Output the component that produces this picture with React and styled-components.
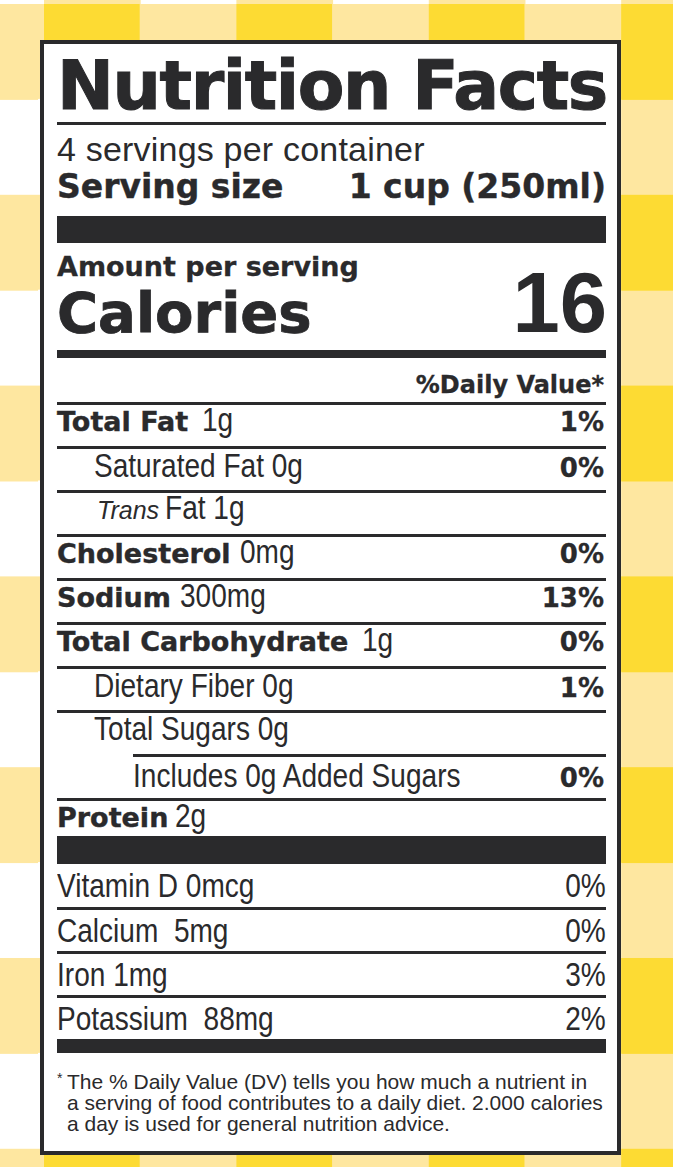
import React from "react";
import styled, { createGlobalStyle } from "styled-components";

const INK = "#2a2a2c";
const HEAVY = `"DejaVu Sans", "Liberation Sans", Arial, sans-serif`;
const PLAIN = `"Liberation Sans", Arial, sans-serif`;

const GlobalStyle = createGlobalStyle`
  html, body { margin: 0; padding: 0; background: #fff; }
  * { box-sizing: border-box; }
`;

const Page = styled.div`
  width: 673px;
  height: 1167px;
  overflow: hidden;
  padding: 40px 0 0 40px;
  background-color: #fff;
  background-image: conic-gradient(
    from 0deg at 50% 50%,
    #fee7a0 0 25%,
    #ffffff 0 50%,
    #fee7a0 0 75%,
    #fddb33 0
  );
  background-size: 192.4px 190.8px;
  background-position: 44px 4px;
`;

const Label = styled.section`
  width: 581px;
  border: 4px solid ${INK};
  background: #fff;
  color: ${INK};
  padding: 0 11px 17px 13px;
`;

const Title = styled.h1`
  margin: 8px 0 0;
  font-family: ${HEAVY};
  font-weight: 700;
  font-size: 68px;
  line-height: 68px;
  letter-spacing: -1.4px;
  -webkit-text-stroke: 1px ${INK};
  white-space: nowrap;
`;

const Rule = styled.div`
  height: ${(p) => p.$h}px;
  margin-top: ${(p) => p.$mt || 0}px;
  background: ${INK};
`;

const Servings = styled.div`
  margin-top: 6px;
  font-family: ${PLAIN};
  font-size: 34px;
  line-height: 36px;
  letter-spacing: 0.2px;
`;

const ServingSize = styled.div`
  margin-top: 2px;
  display: flex;
  justify-content: space-between;
  font-family: ${HEAVY};
  font-weight: 700;
  font-size: 33px;
  line-height: 36px;
  -webkit-text-stroke: 0.4px ${INK};
  white-space: nowrap;
`;

const CalBlock = styled.div`
  margin-top: 5px;
  display: flex;
  justify-content: space-between;
  align-items: flex-end;
`;

const CalLeft = styled.div`
  display: flex;
  flex-direction: column;
  font-family: ${HEAVY};
  font-weight: 700;
`;

const Amount = styled.div`
  font-size: 27px;
  line-height: 37px;
  -webkit-text-stroke: 0.3px ${INK};
`;

const CalWord = styled.div`
  font-size: 56px;
  line-height: 56px;
  -webkit-text-stroke: 0.8px ${INK};
`;

const CalValue = styled.div`
  font-family: ${PLAIN};
  font-weight: 700;
  font-size: 85px;
  line-height: 76px;
  margin-right: -1px;
`;

const DVHead = styled.div`
  height: 44px;
  padding-top: 15px;
  padding-right: 2px;
  text-align: right;
  font-family: ${HEAVY};
  font-weight: 700;
  font-size: 24px;
  line-height: 24px;
  -webkit-text-stroke: 0.3px ${INK};
`;

const Row = styled.div`
  display: flex;
  justify-content: space-between;
  align-items: baseline;
  height: ${(p) => p.$h || 44}px;
  margin-left: ${(p) => p.$inset || 0}px;
  border-top: ${(p) => (p.$noRule ? "none" : `3px solid ${INK}`)};
  padding-top: ${(p) => p.$pt || 0}px;
  padding-left: ${(p) => p.$indent || 0}px;
  line-height: 30px;
  white-space: pre;
`;

const Name = styled.span`
  display: flex;
  align-items: baseline;
`;

const Bold = styled.span`
  font-family: ${HEAVY};
  font-weight: 700;
  font-size: 27px;
  -webkit-text-stroke: 0.4px ${INK};
`;

/* Condensed Helvetica look: regular face squeezed horizontally */
const Reg = styled.span`
  display: inline-block;
  font-family: ${PLAIN};
  font-size: 33px;
  margin-left: ${(p) => p.$ml || 0}px;
  transform: scaleX(0.85);
  transform-origin: ${(p) => (p.$right ? "right" : "left")} center;
`;

const Ital = styled.span`
  font-family: ${PLAIN};
  font-style: italic;
  font-size: 25px;
  margin-right: 6px;
`;

const Pct = styled.span`
  font-family: ${HEAVY};
  font-weight: 700;
  font-size: 26px;
  padding-right: 2px;
  -webkit-text-stroke: 0.3px ${INK};
`;

const Footnote = styled.div`
  margin-top: 18px;
  display: flex;
  font-family: ${PLAIN};
  font-size: 21px;
  line-height: 21px;
`;

const Star = styled.span`
  width: 10px;
  flex: none;
  font-size: 14px;
  line-height: 14px;
`;

const Note = styled.p`
  margin: 0;
  white-space: nowrap;
`;

const nutrients = [
  { bold: "Total Fat", amount: "1g", ml: 14, dv: "1%" },
  { indent: 37, text: "Saturated Fat 0g", dv: "0%", pt: 2 },
  { indent: 40, ital: "Trans", text: "Fat 1g" },
  { bold: "Cholesterol", amount: "0mg", ml: 9, dv: "0%" },
  { bold: "Sodium", amount: "300mg", ml: 9, dv: "13%" },
  { bold: "Total Carbohydrate", amount: "1g", ml: 14, dv: "0%" },
  { indent: 37, text: "Dietary Fiber 0g", dv: "1%", pt: 2 },
  { indent: 37, text: "Total Sugars 0g", pt: 1 },
  { inset: 76, text: "Includes 0g Added Sugars", dv: "0%", pt: 4 },
  { bold: "Protein", amount: "2g", ml: 7, h: 38 },
];

const vitamins = [
  { text: "Vitamin D 0mcg", dv: "0%", noRule: true, h: 43, pt: 7 },
  { text: "Calcium  5mg", dv: "0%", pt: 6 },
  { text: "Iron 1mg", dv: "3%", pt: 6 },
  { text: "Potassium  88mg", dv: "2%", pt: 6 },
];

function NutrientRow({ n }) {
  return (
    <Row $h={n.h} $inset={n.inset} $indent={n.indent} $pt={n.pt} $noRule={n.noRule}>
      <Name>
        {n.bold && <Bold>{n.bold}</Bold>}
        {n.amount && <Reg $ml={n.ml}>{n.amount}</Reg>}
        {n.ital && <Ital>{n.ital}</Ital>}
        {n.text && <Reg>{n.text}</Reg>}
      </Name>
      {n.dv && <Pct>{n.dv}</Pct>}
    </Row>
  );
}

export default function App() {
  return (
    <>
      <GlobalStyle />
      <Page>
        <Label>
          <Title>Nutrition Facts</Title>
          <Rule $h={3} $mt={2} />
          <Servings>4 servings per container</Servings>
          <ServingSize>
            <span>Serving size</span>
            <span>1 cup (250ml)</span>
          </ServingSize>
          <Rule $h={27} $mt={11} />
          <CalBlock>
            <CalLeft>
              <Amount>Amount per serving</Amount>
              <CalWord>Calories</CalWord>
            </CalLeft>
            <CalValue>16</CalValue>
          </CalBlock>
          <Rule $h={8} $mt={9} />
          <DVHead>%Daily Value*</DVHead>
          {nutrients.map((n, i) => (
            <NutrientRow key={i} n={n} />
          ))}
          <Rule $h={28} />
          {vitamins.map((v, i) => (
            <Row key={i} $h={v.h} $pt={v.pt} $noRule={v.noRule}>
              <Reg>{v.text}</Reg>
              <Reg $right>{v.dv}</Reg>
            </Row>
          ))}
          <Rule $h={14} />
          <Footnote>
            <Star>*</Star>
            <Note>
              The % Daily Value (DV) tells you how much a nutrient in
              <br />
              a serving of food contributes to a daily diet. 2.000 calories
              <br />
              a day is used for general nutrition advice.
            </Note>
          </Footnote>
        </Label>
      </Page>
    </>
  );
}
